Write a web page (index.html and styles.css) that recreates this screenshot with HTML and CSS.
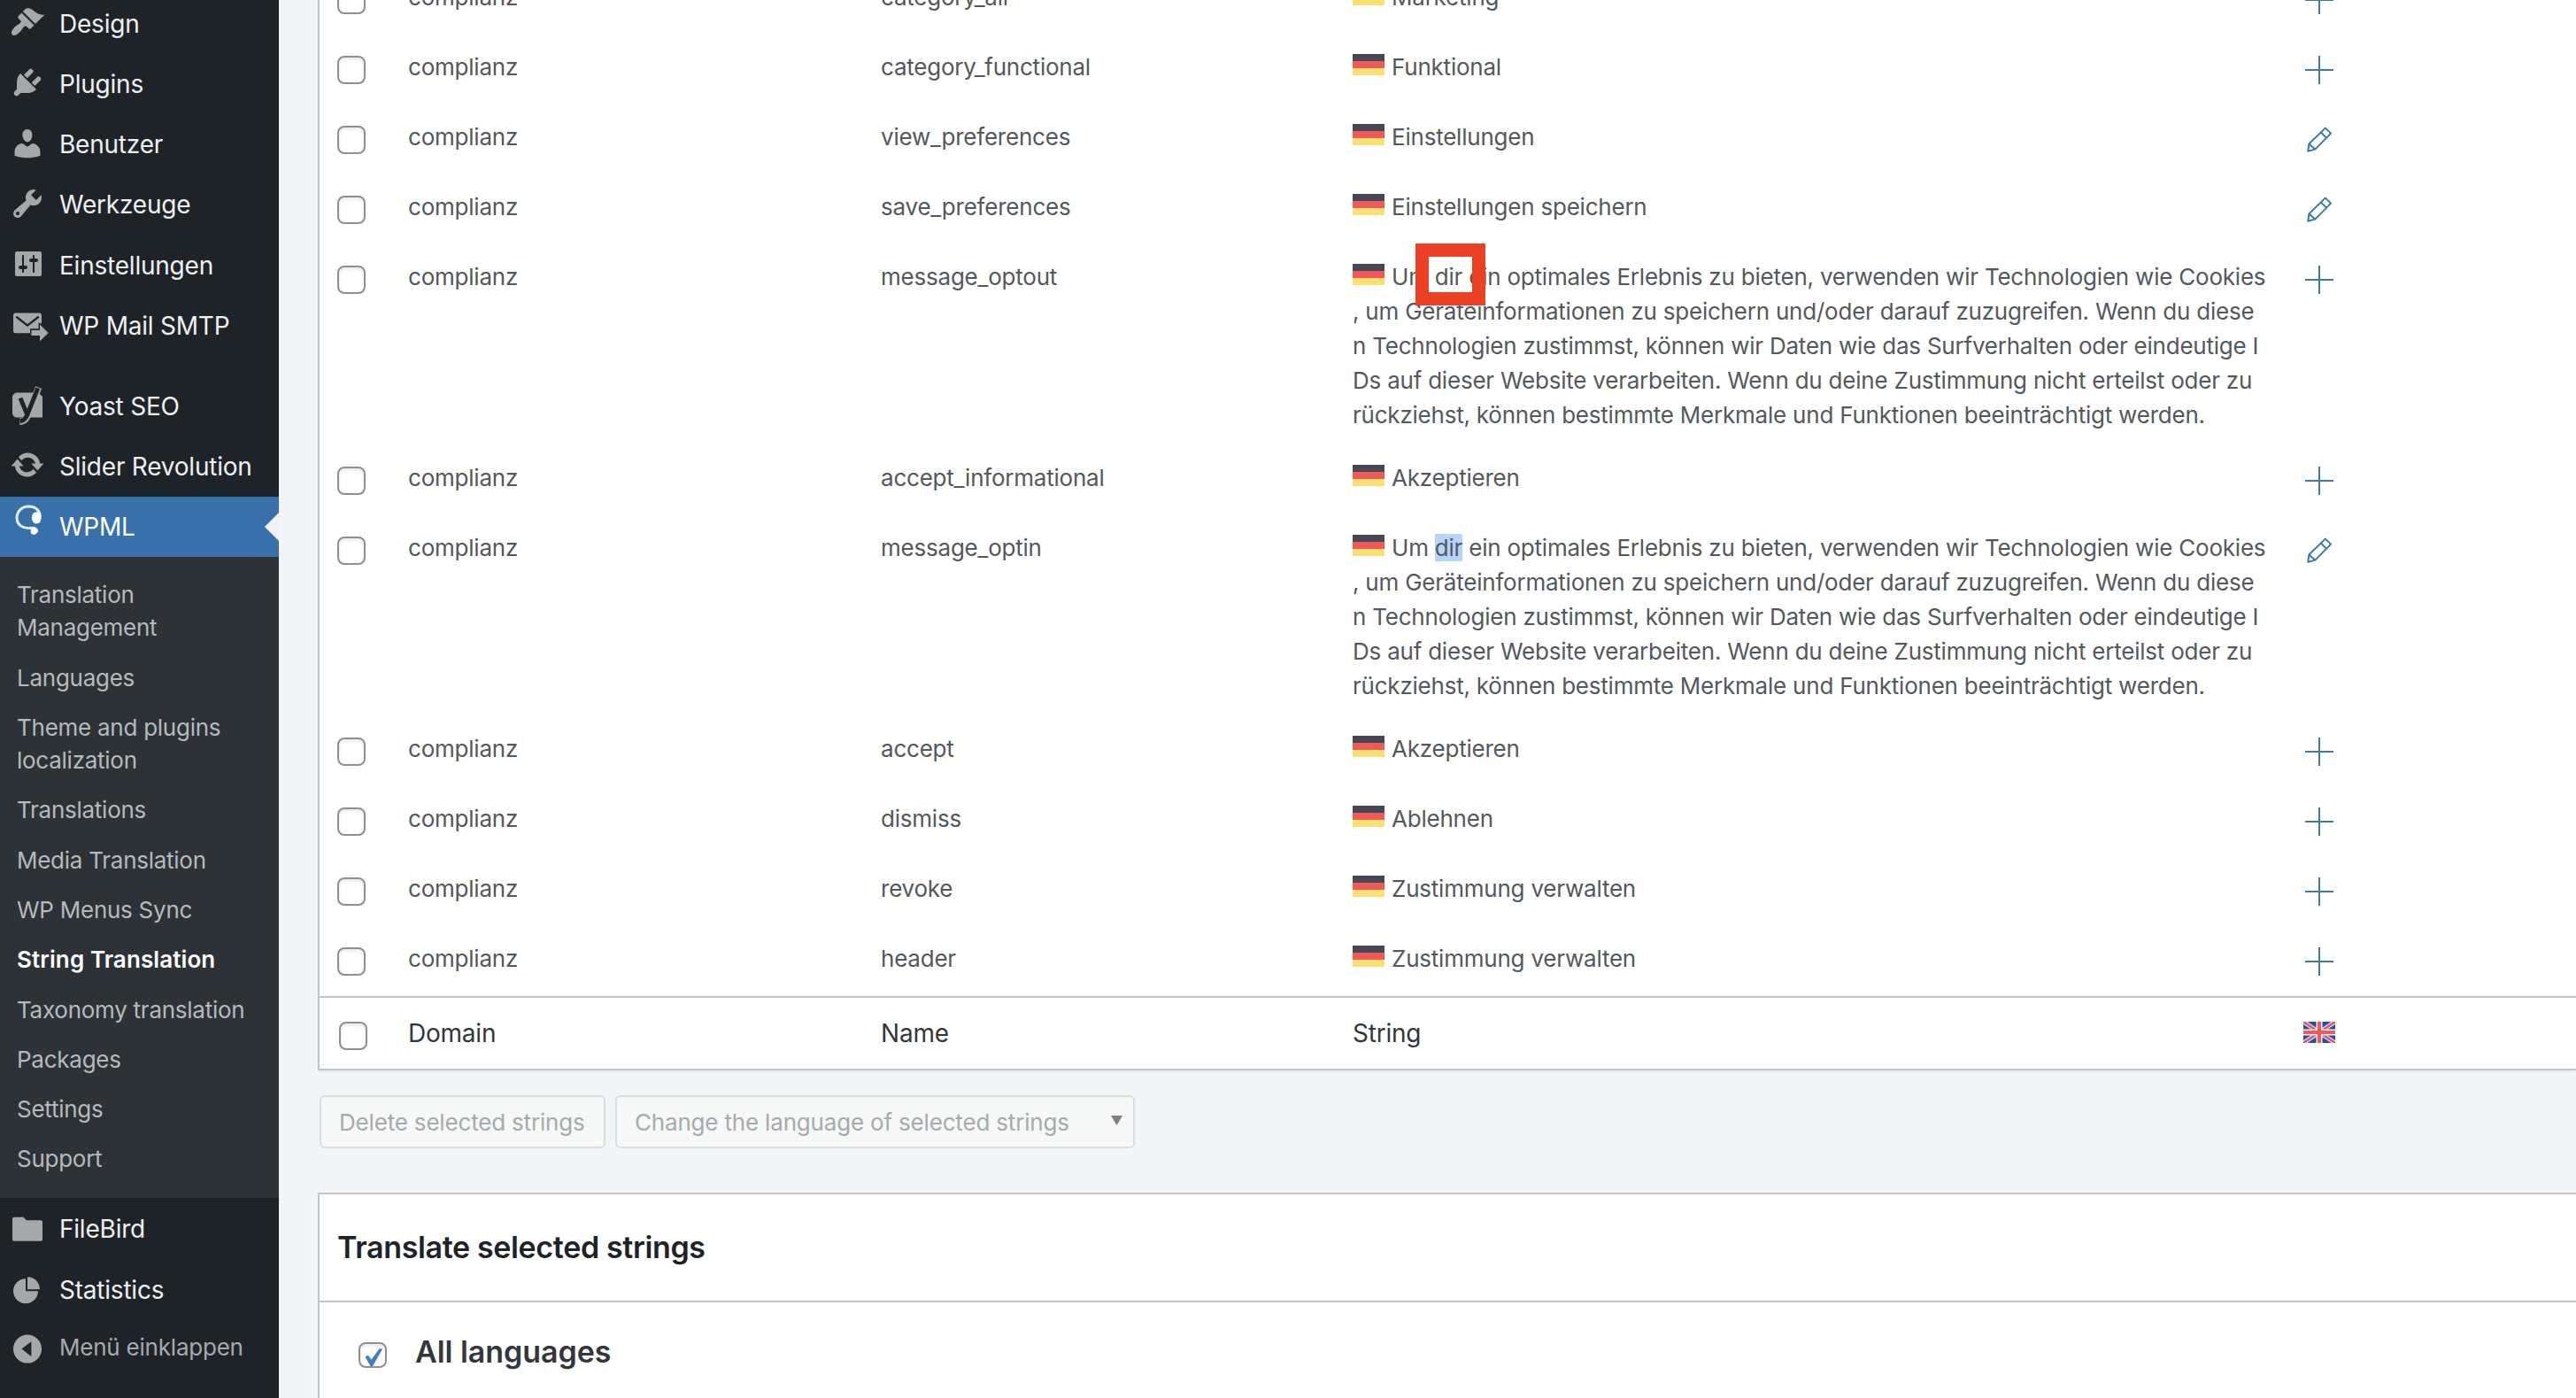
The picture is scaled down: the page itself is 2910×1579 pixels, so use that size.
FILE: index.html
```html
<!DOCTYPE html>
<html lang="de">
<head>
    <meta charset="utf-8">
    <title>String Translation</title>
    <link rel="stylesheet" href="styles.css">
</head>
<body>
    <svg class="sprite">
        <symbol id="plus" viewBox="0 0 32 32"><path d="M16 0v32M0 16h32" fill="none" stroke="#3d7aa8" stroke-width="2"/></symbol>
        <symbol id="pencil" viewBox="0 0 32 32"><path d="M3.2 28.8l1.2-8.3L22.8 2.6l6.3 6-17.8 18zM4.4 20.5l6.9 6.1M17.8 7.5l6.3 6.1" fill="none" stroke="#3d7aa8" stroke-width="2" stroke-linejoin="round"/></symbol>
        <symbol id="flag-de" viewBox="0 0 36 24"><path fill="#464655" d="M0 0h36v8H0z"/><path fill="#ee5a5a" d="M0 8h36v8H0z"/><path fill="#fae072" d="M0 16h36v8H0z"/></symbol>
        <symbol id="flag-gb" viewBox="0 0 36 24"><path fill="#2450a4" d="M0 0h36v24H0z"/><path d="M0 0l36 24M36 0L0 24" stroke="#e6d5e0" stroke-width="5"/><path d="M0 0l36 24M36 0L0 24" stroke="#e3566a" stroke-width="2.4"/><path d="M18 0v24M0 12h36" stroke="#f5eef2" stroke-width="7"/><path d="M18 0v24M0 12h36" stroke="#ee5a5a" stroke-width="4"/></symbol>
    </svg>

    <div class="wrapper">
        <nav class="sidebar">
            <a class="menu-item"><svg class="menu-icon" viewBox="0 0 20 20"><path d="M14.48 11.06L7.41 3.99l1.5-1.5c.5-.56 2.3-.47 3.51.32 1.21.8 1.43 1.28 2.91 2.1 1.18.64 2.45 1.26 4.45.85zm-.71.71L6.7 4.7 4.93 6.47c-.39.39-.39 1.02 0 1.41l1.06 1.06c.39.39.39 1.03 0 1.42-.6.6-1.43 1.11-2.21 1.69-.35.26-.7.53-1.01.84C1.43 14.23.4 16.08 1.4 17.07c.99 1 2.84-.03 4.18-1.36.31-.31.58-.66.85-1.02.57-.78 1.08-1.61 1.69-2.21.39-.39 1.02-.39 1.41 0l1.06 1.06c.39.39 1.02.39 1.41 0z"/></svg>Design</a>
            <a class="menu-item"><svg class="menu-icon" viewBox="0 0 20 20"><path d="M13.11 4.36L9.87 7.6 8 5.73l3.24-3.24c.35-.34 1.05-.2 1.56.32.52.51.66 1.21.31 1.55zm-8 1.77l.91-1.12 9.01 9.01-1.19.84c-.71.71-2.63 1.16-3.82 1.16H6.14L4.9 17.26c-.59.59-1.54.59-2.12 0-.59-.58-.59-1.53 0-2.12l1.24-1.24v-3.88c0-1.13.4-3.19 1.09-3.89zm7.26 3.97l3.24-3.24c.34-.35 1.04-.21 1.55.31.52.51.66 1.21.31 1.55l-3.24 3.25z"/></svg>Plugins</a>
            <a class="menu-item"><svg class="menu-icon" viewBox="0 0 20 20"><path d="M10 9.25c-2.27 0-2.73-3.44-2.73-3.44C7 4.02 7.82 2 9.97 2c2.16 0 2.98 2.02 2.71 3.81 0 0-.41 3.44-2.68 3.44zm0 2.57L12.72 10c2.39 0 4.52 2.33 4.52 4.53v2.49s-3.65 1.13-7.24 1.13c-3.65 0-7.24-1.13-7.24-1.13v-2.49c0-2.25 1.94-4.48 4.47-4.48z"/></svg>Benutzer</a>
            <a class="menu-item"><svg class="menu-icon" viewBox="0 0 20 20"><path d="M16.68 9.77c-1.34 1.34-3.3 1.67-4.95.99l-5.41 6.52c-.99.99-2.59.99-3.58 0s-.99-2.59 0-3.57l6.52-5.42c-.68-1.65-.35-3.61.99-4.95 1.28-1.28 3.12-1.62 4.72-1.06l-2.89 2.89 2.82 2.82 2.86-2.87c.53 1.58.18 3.39-1.08 4.65zM3.81 16.21c.4.39 1.04.39 1.43 0 .4-.4.4-1.04 0-1.43-.39-.4-1.03-.4-1.43 0-.39.39-.39 1.03 0 1.43z"/></svg>Werkzeuge</a>
            <a class="menu-item"><svg class="menu-icon" viewBox="0 0 20 20"><path fill-rule="evenodd" d="M18 16V4c0-.55-.45-1-1-1H4c-.55 0-1 .45-1 1v12c0 .55.45 1 1 1h13c.55 0 1-.45 1-1zM8 11h1c.55 0 1 .45 1 1s-.45 1-1 1H8v1.5c0 .28-.22.5-.5.5s-.5-.22-.5-.5V13H6c-.55 0-1-.45-1-1s.45-1 1-1h1V5.500c0-.28.22-.5.5-.5s.5.22.5.5V11zm5-2h-1c-.55 0-1-.45-1-1s.45-1 1-1h1V5.500c0-.28.22-.5.5-.5s.5.22.5.5V7h1c.55 0 1 .45 1 1s-.45 1-1 1h-1v5.500c0 .28-.22.5-.5.5s-.5-.22-.5-.5V9z"/></svg>Einstellungen</a>
            <a class="menu-item"><svg class="menu-icon" viewBox="0 0 20 20"><path d="M3.200 3.300h13.600c.7 0 1.200.5 1.200 1.200v4.800l-1.700-.5v3.300h-4.800v2.500H3.200c-.7 0-1.200-.5-1.200-1.200V4.500c0-.7.5-1.200 1.200-1.200z"/><path fill="none" stroke="#1e2327" stroke-width="1.2" stroke-linecap="round" d="M4 5.600l6 4.700 6-4.700"/><path d="M12.200 13h4.800V9.800l4.800 4.700-4.800 4.700V16h-4.800z"/></svg>WP Mail SMTP</a>
            <div class="menu-separator"></div>
            <a class="menu-item"><svg class="menu-icon" viewBox="0 0 20 20"><path d="M4.200 3.300h12l2.300 2.200v11.800H4.200c-1.500 0-2.700-1.200-2.700-2.700V6c0-1.500 1.200-2.700 2.700-2.700z"/><path fill="none" stroke="#a4a8aa" stroke-width="3.700" d="M16.300.3l-5.600 14.500c-1.200 3.600-2.500 4.700-5.100 4.800"/><path fill="none" stroke="#1e2327" stroke-width="2.500" d="M6 6.300l3.700 9M15.900.7l-5.600 14c-1.100 3.300-2.300 4.400-4.500 4.700"/></svg>Yoast SEO</a>
            <a class="menu-item"><svg class="menu-icon" viewBox="0 0 20 20"><path d="M10.200 3.280c3.53 0 6.43 2.61 6.92 6h2.080l-3.500 4-3.500-4h2.320c-.45-1.970-2.210-3.450-4.320-3.450-1.450 0-2.730.71-3.540 1.780L4.950 5.660C6.230 4.200 8.110 3.280 10.200 3.280zm-.4 13.440c-3.520 0-6.430-2.610-6.920-6H.8l3.500-4c1.170 1.330 2.330 2.670 3.500 4H5.480c.45 1.970 2.210 3.450 4.320 3.450 1.450 0 2.730-.71 3.540-1.780l1.710 1.950c-1.280 1.460-3.150 2.380-5.250 2.380z"/></svg>Slider Revolution</a>
            <a class="menu-item current"><svg class="menu-icon" viewBox="0 0 20 20"><path fill="none" stroke="#e3f0fb" stroke-width="1.500" stroke-linecap="round" d="M16.500 7.500C18.500 2.500 15.300-1 10.700-1 6.600-1 4 2 4 5.500c0 3.700 3.300 6.200 7.500 5.700 2.600-.3 4.100.4 3.700 2"/><ellipse cx="15" cy="5.400" rx="2.600" ry="3.300"/><circle cx="13.600" cy="13.100" r="1.800"/></svg>WPML</a>
            <div class="submenu">
                <a>Translation<br>Management</a>
                <a>Languages</a>
                <a>Theme and plugins<br>localization</a>
                <a>Translations</a>
                <a>Media Translation</a>
                <a>WP Menus Sync</a>
                <a class="active">String Translation</a>
                <a>Taxonomy translation</a>
                <a>Packages</a>
                <a>Settings</a>
                <a>Support</a>
            </div>
            <a class="menu-item"><svg class="menu-icon" viewBox="0 0 20 20"><path d="M2.500 3.900h5.200l1.700 1.700h8.100c.6 0 1 .4 1 1v9.800c0 .6-.4 1-1 1h-15c-.6 0-1-.4-1-1V4.900c0-.6.4-1 1-1z"/></svg>FileBird</a>
            <a class="menu-item"><svg class="menu-icon" viewBox="0 0 20 20"><path d="M10 10.600v-7c3.870 0 7 3.130 7 7zM9 4.600v7h7c0 3.870-3.130 7-7 7s-7-3.130-7-7 3.130-7 7-7z"/></svg>Statistics</a>
            <a class="menu-item collapse"><svg class="menu-icon" viewBox="0 0 20 20"><path fill-rule="evenodd" d="M10 2.800a8 8 0 1 1 0 16 8 8 0 0 1 0-16zm2.200 12.200V6.600L6.700 10.800z"/></svg>Menü einklappen</a>
        </nav>

        <main class="content">
            <div class="string-table">
                <div class="row"><span class="checkbox"></span><span>complianz</span><span>category_all</span><span><svg class="flag"><use href="#flag-de"/></svg>Marketing</span><svg class="action"><use href="#plus"/></svg></div>
                <div class="row"><span class="checkbox"></span><span>complianz</span><span>category_functional</span><span><svg class="flag"><use href="#flag-de"/></svg>Funktional</span><svg class="action"><use href="#plus"/></svg></div>
                <div class="row"><span class="checkbox"></span><span>complianz</span><span>view_preferences</span><span><svg class="flag"><use href="#flag-de"/></svg>Einstellungen</span><svg class="action"><use href="#pencil"/></svg></div>
                <div class="row"><span class="checkbox"></span><span>complianz</span><span>save_preferences</span><span><svg class="flag"><use href="#flag-de"/></svg>Einstellungen speichern</span><svg class="action"><use href="#pencil"/></svg></div>
                <div class="row"><span class="checkbox"></span><span>complianz</span><span>message_optout</span><span><svg class="flag"><use href="#flag-de"/></svg>Um <span class="marked">dir</span> ein optimales Erlebnis zu bieten, verwenden wir Technologien wie Cookies<br>, um Geräteinformationen zu speichern und/oder darauf zuzugreifen. Wenn du diese<br>n Technologien zustimmst, können wir Daten wie das Surfverhalten oder eindeutige I<br>Ds auf dieser Website verarbeiten. Wenn du deine Zustimmung nicht erteilst oder zu<br>rückziehst, können bestimmte Merkmale und Funktionen beeinträchtigt werden.</span><svg class="action"><use href="#plus"/></svg></div>
                <div class="row"><span class="checkbox"></span><span>complianz</span><span>accept_informational</span><span><svg class="flag"><use href="#flag-de"/></svg>Akzeptieren</span><svg class="action"><use href="#plus"/></svg></div>
                <div class="row"><span class="checkbox"></span><span>complianz</span><span>message_optin</span><span><svg class="flag"><use href="#flag-de"/></svg>Um <span class="selected">dir</span> ein optimales Erlebnis zu bieten, verwenden wir Technologien wie Cookies<br>, um Geräteinformationen zu speichern und/oder darauf zuzugreifen. Wenn du diese<br>n Technologien zustimmst, können wir Daten wie das Surfverhalten oder eindeutige I<br>Ds auf dieser Website verarbeiten. Wenn du deine Zustimmung nicht erteilst oder zu<br>rückziehst, können bestimmte Merkmale und Funktionen beeinträchtigt werden.</span><svg class="action"><use href="#pencil"/></svg></div>
                <div class="row"><span class="checkbox"></span><span>complianz</span><span>accept</span><span><svg class="flag"><use href="#flag-de"/></svg>Akzeptieren</span><svg class="action"><use href="#plus"/></svg></div>
                <div class="row"><span class="checkbox"></span><span>complianz</span><span>dismiss</span><span><svg class="flag"><use href="#flag-de"/></svg>Ablehnen</span><svg class="action"><use href="#plus"/></svg></div>
                <div class="row"><span class="checkbox"></span><span>complianz</span><span>revoke</span><span><svg class="flag"><use href="#flag-de"/></svg>Zustimmung verwalten</span><svg class="action"><use href="#plus"/></svg></div>
                <div class="row"><span class="checkbox"></span><span>complianz</span><span>header</span><span><svg class="flag"><use href="#flag-de"/></svg>Zustimmung verwalten</span><svg class="action"><use href="#plus"/></svg></div>
                <div class="row table-footer"><span class="checkbox"></span><span>Domain</span><span>Name</span><span>String</span><svg class="language"><use href="#flag-gb"/></svg></div>
            </div>

            <div class="buttons">
                <div class="button">Delete selected strings</div>
                <div class="button select">Change the language of selected strings<svg class="caret" viewBox="0 0 13 11"><path d="M0 0h13L6.500 11z"/></svg></div>
            </div>

            <section class="panel">
                <h2>Translate selected strings</h2>
                <div class="languages">
                    <span class="checkbox checked"><svg viewBox="0 0 24 24"><path d="M2.500 12.500l3.500-1.800 3.400 5L18.800 3l3.200.8-11 19.200H8.500z"/></svg></span>
                    <h3>All languages</h3>
                </div>
            </section>
        </main>
    </div>
</body>
</html>
```
FILE: styles.css
```css
* {
    box-sizing: border-box;
}

body {
    margin: 0;
    background-color: #f1f5f8;
    color: #53585d;
    font-family: Inter, "Liberation Sans", sans-serif;
    font-size: 26px;
    line-height: 39px;
    letter-spacing: -0.22px;
    overflow: hidden;
}

.sprite {
    display: none;
}

.wrapper {
    display: flex;
    height: 1579px;
    overflow: hidden;
}

/* Sidebar */
.sidebar {
    width: 315px;
    flex-shrink: 0;
    background-color: #1e2327;
    color: #f0f0f1;
}

.menu-item {
    display: flex;
    align-items: center;
    gap: 16px;
    height: 68.3px;
    padding-left: 11px;
    padding-top: 1px;
    font-size: 28px;
    white-space: nowrap;
}

.menu-item:first-child {
    margin-top: -7.6px;
}

.menu-icon {
    width: 40px;
    height: 40px;
    margin-bottom: 4px;
    flex-shrink: 0;
    fill: #a4a8aa;
    overflow: visible;
}

.menu-separator {
    height: 22.3px;
}

.menu-item.current {
    position: relative;
    background-color: #3770ab;
    color: #fff;
}

.current .menu-icon {
    fill: #fff;
}

.menu-item.current::after {
    content: "";
    position: absolute;
    right: 0;
    top: 18px;
    border: 16px solid transparent;
    border-left-width: 0;
    border-right-color: #f0f0f1;
}

.submenu {
    display: flex;
    flex-direction: column;
    gap: 19.2px;
    padding: 24px 19px 25.8px;
    margin-bottom: 1px;
    background-color: #2d3236;
    color: #b5babd;
    line-height: 37.1px;
    letter-spacing: -0.26px;
    white-space: nowrap;
}

.submenu .active {
    color: #fff;
    font-weight: 600;
    letter-spacing: 0.1px;
}

.menu-item.collapse {
    margin-top: -4px;
    font-size: 26px;
    color: #a7aaad;
}

.collapse .menu-icon {
    margin-bottom: 0;
}

/* String table */
.content {
    flex: 1;
    margin: -40px 0 0 44px;
}

.string-table {
    border: 2px solid #c3c4c7;
    border-top: none;
    border-right: none;
    background-color: #fff;
    box-shadow: 0 2px 2px rgba(0, 0, 0, 0.04);
}

.row {
    display: grid;
    grid-template-columns: 80px 534px 533px 1074px 36px;
    align-items: start;
    min-height: 79px;
    padding: 17px 0 15px 20px;
    white-space: nowrap;
}

.checkbox {
    display: block;
    width: 32px;
    height: 32px;
    margin-top: 7px;
    border: 2px solid #8c8f94;
    border-radius: 8px;
    background-color: #fff;
    box-shadow: inset 0 2px 4px rgba(0, 0, 0, 0.1);
}

.flag {
    width: 36px;
    height: 24px;
    margin-right: 8px;
}

.action {
    width: 32px;
    height: 32px;
    margin: 7px 0 0 2px;
}

.marked {
    position: relative;
}

/* Red frame drawn over the word */
.marked::before {
    content: "";
    position: absolute;
    box-sizing: border-box;
    left: -22px;
    top: -22px;
    width: 79px;
    height: 70px;
    border: 15px solid #ec4024;
}

.selected {
    background-color: #b7d4fa;
}

.table-footer {
    height: 82px;
    padding-top: 21px;
    padding-left: 22px;
    grid-template-columns: 78px 534px 533px 1074px 36px;
    border-top: 2px solid #c3c4c7;
    color: #32373c;
    font-size: 28px;
}

.table-footer .checkbox {
    margin-top: 6px;
}

.language {
    width: 36px;
    height: 24px;
    margin-top: 6px;
}

/* Buttons */
.buttons {
    display: flex;
    gap: 11px;
    margin: 28px 0 50px 2px;
}

.button {
    display: flex;
    align-items: center;
    width: 323px;
    height: 60px;
    padding-left: 20px;
    border: 2px solid #dcdcde;
    border-radius: 6px;
    background-color: #f6f7f7;
    color: #a7aaad;
    letter-spacing: -0.18px;
    white-space: nowrap;
}

.button.select {
    justify-content: space-between;
    width: 587px;
    padding-right: 12px;
}

.caret {
    width: 13px;
    height: 11px;
    margin-bottom: 3px;
    fill: #7e7e7e;
}

/* Translate panel */
.panel {
    height: 400px;
    border: 2px solid #c3c4c7;
    border-right: none;
    background-color: #fff;
}

.panel h2 {
    height: 122px;
    margin: 0;
    padding-left: 20px;
    border-bottom: 2px solid #c3c4c7;
    color: #1e2327;
    font-size: 34px;
    font-weight: 600;
    letter-spacing: -0.35px;
    line-height: 120px;
}

.languages {
    display: flex;
    gap: 32px;
    padding: 35px 0 0 44px;
}

.languages .checkbox {
    height: 29px;
    margin-top: 10px;
}

.checkbox.checked svg {
    display: block;
    width: 24px;
    height: 24px;
    margin-left: 3px;
    margin-top: 2px;
    fill: #3f7fc1;
}

.languages h3 {
    margin: 0;
    color: #32373c;
    font-size: 34px;
    font-weight: 600;
    letter-spacing: -0.05px;
    line-height: 42px;
}
```
